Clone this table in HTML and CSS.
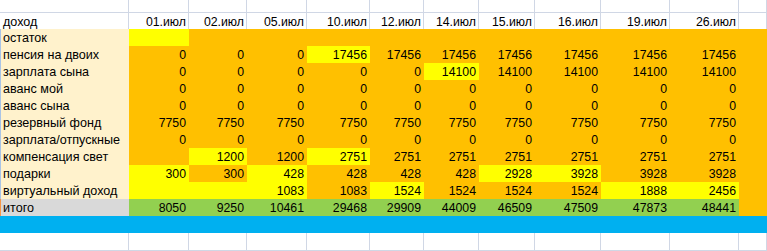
FILE: index.html
```html
<!DOCTYPE html>
<html lang="ru">
<head>
<meta charset="utf-8">
<title>доход</title>
<link rel="stylesheet" href="styles.css">
</head>
<body>
<div class="sheet">
  <div class="row top"><div class="c"></div><div class="c"></div><div class="c"></div><div class="c"></div><div class="c"></div><div class="c"></div><div class="c"></div><div class="c"></div><div class="c"></div><div class="c"></div><div class="c"></div><div class="c"></div></div>
  <div class="row head"><div class="c l">доход</div><div class="c">01.июл</div><div class="c">02.июл</div><div class="c">05.июл</div><div class="c">10.июл</div><div class="c">12.июл</div><div class="c">14.июл</div><div class="c">15.июл</div><div class="c">16.июл</div><div class="c">19.июл</div><div class="c">26.июл</div><div class="c"></div></div>
  <div class="row"><div class="c l b">остаток</div><div class="c y"></div><div class="c o"></div><div class="c o"></div><div class="c o"></div><div class="c o"></div><div class="c o"></div><div class="c o"></div><div class="c o"></div><div class="c o"></div><div class="c o"></div><div class="c o"></div></div>
  <div class="row"><div class="c l b">пенсия на двоих</div><div class="c o">0</div><div class="c o">0</div><div class="c o">0</div><div class="c y">17456</div><div class="c o">17456</div><div class="c o">17456</div><div class="c o">17456</div><div class="c o">17456</div><div class="c o">17456</div><div class="c o">17456</div><div class="c o"></div></div>
  <div class="row"><div class="c l b">зарплата сына</div><div class="c o">0</div><div class="c o">0</div><div class="c o">0</div><div class="c o">0</div><div class="c o">0</div><div class="c y">14100</div><div class="c o">14100</div><div class="c o">14100</div><div class="c o">14100</div><div class="c o">14100</div><div class="c o"></div></div>
  <div class="row"><div class="c l b">аванс мой</div><div class="c o">0</div><div class="c o">0</div><div class="c o">0</div><div class="c o">0</div><div class="c o">0</div><div class="c o">0</div><div class="c o">0</div><div class="c o">0</div><div class="c o">0</div><div class="c o">0</div><div class="c o"></div></div>
  <div class="row"><div class="c l b">аванс сына</div><div class="c o">0</div><div class="c o">0</div><div class="c o">0</div><div class="c o">0</div><div class="c o">0</div><div class="c o">0</div><div class="c o">0</div><div class="c o">0</div><div class="c o">0</div><div class="c o">0</div><div class="c o"></div></div>
  <div class="row"><div class="c l b">резервный фонд</div><div class="c o">7750</div><div class="c o">7750</div><div class="c o">7750</div><div class="c o">7750</div><div class="c o">7750</div><div class="c o">7750</div><div class="c o">7750</div><div class="c o">7750</div><div class="c o">7750</div><div class="c o">7750</div><div class="c o"></div></div>
  <div class="row"><div class="c l b">зарплата/отпускные</div><div class="c o">0</div><div class="c o">0</div><div class="c o">0</div><div class="c o">0</div><div class="c o">0</div><div class="c o">0</div><div class="c o">0</div><div class="c o">0</div><div class="c o">0</div><div class="c o">0</div><div class="c o"></div></div>
  <div class="row"><div class="c l b">компенсация свет</div><div class="c o"></div><div class="c y">1200</div><div class="c o">1200</div><div class="c y">2751</div><div class="c o">2751</div><div class="c o">2751</div><div class="c o">2751</div><div class="c o">2751</div><div class="c o">2751</div><div class="c o">2751</div><div class="c o"></div></div>
  <div class="row"><div class="c l b">подарки</div><div class="c y">300</div><div class="c o">300</div><div class="c y">428</div><div class="c o">428</div><div class="c o">428</div><div class="c o">428</div><div class="c y">2928</div><div class="c y">3928</div><div class="c o">3928</div><div class="c o">3928</div><div class="c o"></div></div>
  <div class="row"><div class="c l b">виртуальный доход</div><div class="c y"></div><div class="c y"></div><div class="c y">1083</div><div class="c o">1083</div><div class="c y">1524</div><div class="c o">1524</div><div class="c o">1524</div><div class="c o">1524</div><div class="c y">1888</div><div class="c y">2456</div><div class="c o"></div></div>
  <div class="row"><div class="c l g">итого</div><div class="c gr">8050</div><div class="c gr">9250</div><div class="c gr">10461</div><div class="c gr">29468</div><div class="c gr">29909</div><div class="c gr">44009</div><div class="c gr">46509</div><div class="c gr">47509</div><div class="c gr">47873</div><div class="c gr">48441</div><div class="c o"></div></div>
  <div class="row blue"></div>
  <div class="row last"><div class="c"></div><div class="c"></div><div class="c"></div><div class="c"></div><div class="c"></div><div class="c"></div><div class="c"></div><div class="c"></div><div class="c"></div><div class="c"></div><div class="c"></div><div class="c"></div></div>
</div>
</body>
</html>
```

FILE: styles.css
```css
html, body {
  margin: 0;
  padding: 0;
  background: #ffffff;
}

.sheet {
  width: 767px;
  height: 251px;
  overflow: hidden;
  font-family: "Liberation Sans", Arial, sans-serif;
  font-size: 12.3px;
  color: #000000;
}

.row {
  display: grid;
  grid-template-columns: 129px 60px 58px 60px 63px 54px 55px 56px 66px 69px 69px 1fr;
  height: 17px;
}

.row.top {
  height: 13px;
}

.row.top .c {
  border-bottom: 1px solid #d0d7e5;
}

.row.head {
  height: 16px;
}

.row.blue {
  background: #00b0f0;
}

.row.last {
  height: 18px;
}

.row.last .c {
  border-bottom: 1px solid #d0d7e5;
}

.c {
  box-sizing: border-box;
  height: 100%;
  border-right: 1px solid #d0d7e5;
  padding: 0 2px 0 0;
  text-align: right;
  line-height: 18px;
  white-space: nowrap;
  overflow: hidden;
}

.c.l {
  text-align: left;
  padding-left: 3px;
  font-size: 12.6px;
}

.b {
  background: #fff2cc;
  border-right-color: #fff2cc;
  box-shadow: inset 1px 0 0 #a9c4e6;
}

.g {
  background: #d9d9d9;
  border-right-color: #d9d9d9;
  box-shadow: inset 1px 0 0 #f79646;
}

.o {
  background: #ffc000;
  border-right-color: #ffc000;
}

.y {
  background: #ffff00;
  border-right-color: #ffff00;
}

.gr {
  background: #92d050;
  border-right-color: #92d050;
}
```
